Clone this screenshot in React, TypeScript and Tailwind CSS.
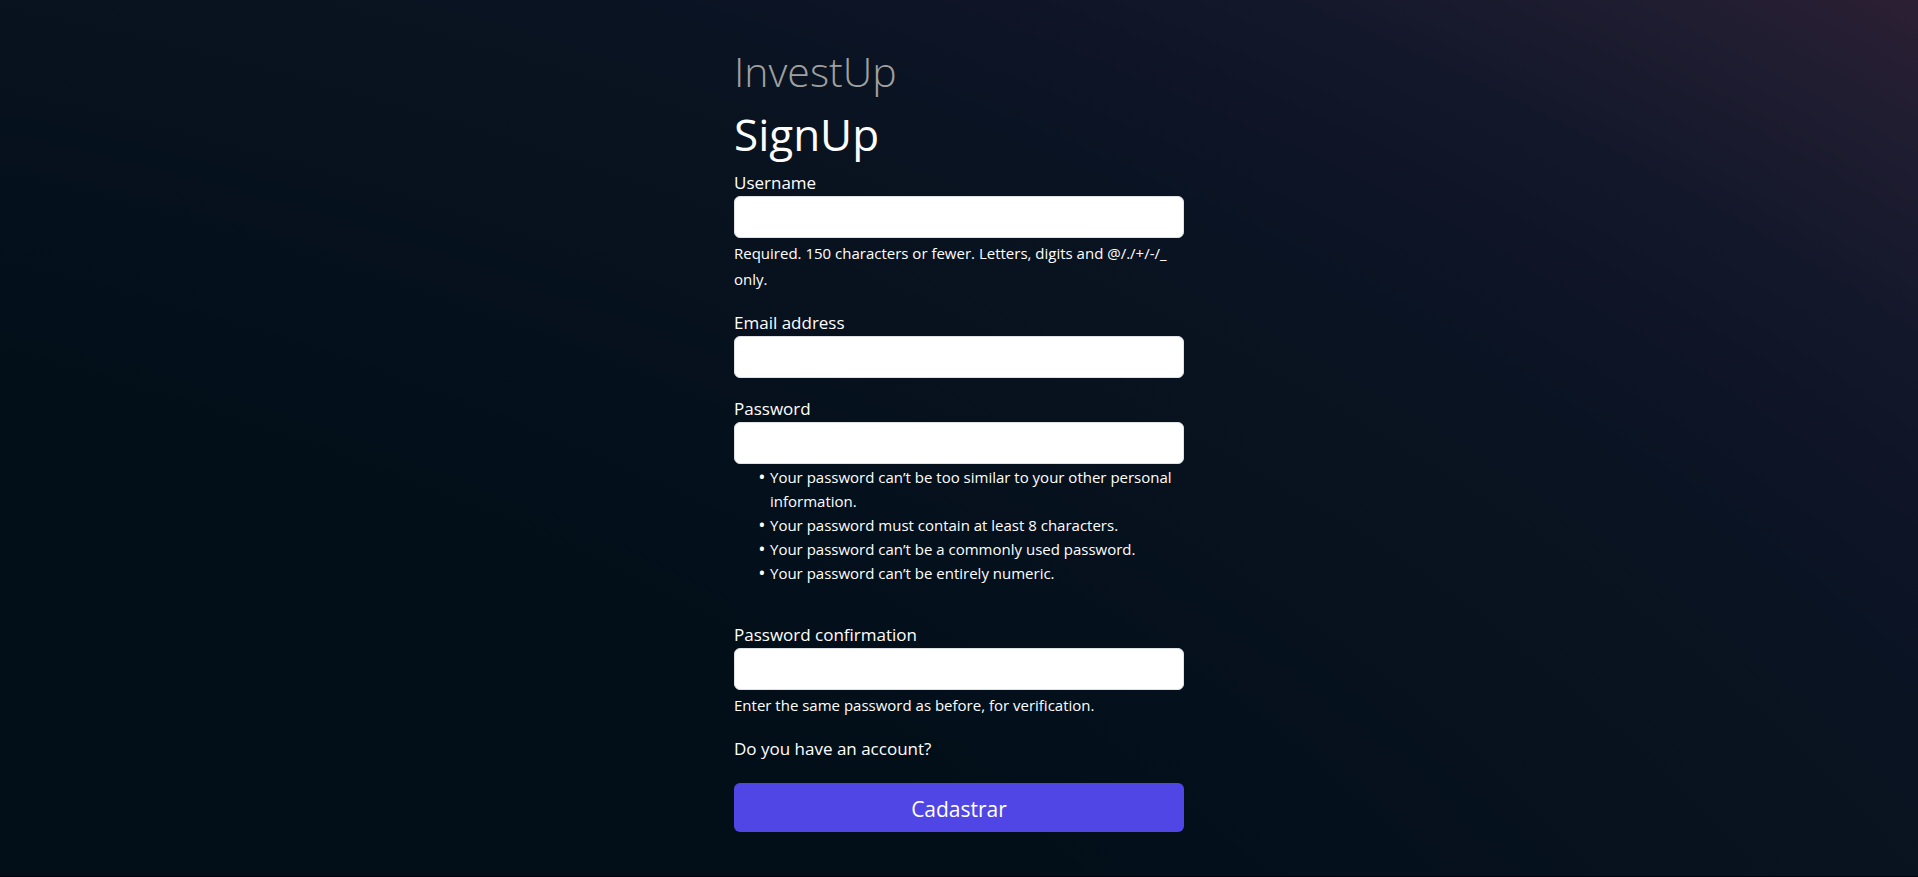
import type { ReactNode } from "react";

type FieldProps = {
  id: string;
  label: string;
  type: string;
  children?: ReactNode;
};

function Field({ id, label, type, children }: FieldProps) {
  return (
    <div className="mb-[17px]">
      <label htmlFor={id} className="block">
        {label}
      </label>
      <input
        id={id}
        name={id}
        type={type}
        className="block h-[42px] w-full rounded-md border border-[#dee2e6] bg-white px-3 text-[#212529]"
      />
      {children}
    </div>
  );
}

const passwordRules = [
  "Your password can’t be too similar to your other personal information.",
  "Your password must contain at least 8 characters.",
  "Your password can’t be a commonly used password.",
  "Your password can’t be entirely numeric.",
];

export default function App() {
  return (
    <main className="flex min-h-screen justify-center border-b border-[#020210] bg-[radial-gradient(228%_260%_at_-63%_182%,#020f19_0%,#020f19_60%,#04101c_67%,#09131f_77%,#0b1324_83%,#13172a_90%,#201d31_96%,#2c1f33_100%)] px-4 pt-11 pb-10 font-['Open_Sans','Noto_Sans',sans-serif] text-[17px] leading-[27px] text-white">
      <div className="w-full max-w-[450px]">
        <h1 className="mb-[9px] text-[41px] leading-[54px] font-light text-[#a0a0a0]">InvestUp</h1>
        <h1 className="mb-2 text-[44px] leading-[54px]">SignUp</h1>
        <form onSubmit={(e) => e.preventDefault()}>
          <Field id="username" label="Username" type="text">
            <p className="pt-[2px] text-[15px] leading-[26px]">
              Required. 150 characters or fewer. Letters, digits and @/./+/-/_ only.
            </p>
          </Field>
          <Field id="email" label="Email address" type="email" />
          <Field id="password" label="Password" type="password">
            <ul className="mb-9 list-disc pt-[1px] pl-9 text-[15px] leading-[24px] marker:font-['Noto_Sans'] marker:text-[18px] marker:leading-none marker:content-['•_']">
              {passwordRules.map((rule) => (
                <li key={rule}>{rule}</li>
              ))}
            </ul>
          </Field>
          <Field id="confirmation" label="Password confirmation" type="password">
            <p className="pt-[2px] text-[15px] leading-[26px]">Enter the same password as before, for verification.</p>
          </Field>
          <a href="#login" className="block">
            Do you have an account?
          </a>
          <button
            type="submit"
            className="mt-[21px] flex h-[49px] w-full items-center justify-center rounded-md bg-[#4f46e5] pt-[3px] text-[21px]"
          >
            Cadastrar
          </button>
        </form>
      </div>
    </main>
  );
}
